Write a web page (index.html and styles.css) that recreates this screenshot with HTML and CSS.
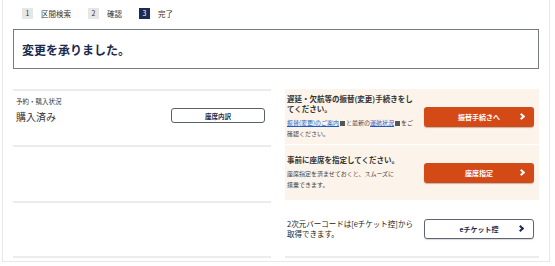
FILE: index.html
```html
<!DOCTYPE html>
<html lang="ja">
<head>
<meta charset="UTF-8" />
<meta name="viewport" content="width=device-width, initial-scale=1" />
<title>変更完了</title>
<link rel="stylesheet" href="styles.css">
</head>
<body>

<div class="frame">
  <ol class="steps">
    <li><span class="num">1</span>区間検索</li>
    <li><span class="num">2</span>確認</li>
    <li class="current"><span class="num">3</span>完了</li>
  </ol>

  <div class="done">
    <h1>変更を承りました。</h1>
  </div>

  <div class="grid">
    <div class="cell left">
      <div class="label">予約・購入状況</div>
      <div class="status">
        <span class="value">購入済み</span>
        <button class="btn btn-line">座席内訳</button>
      </div>
    </div>
    <div class="cell right notice">
      <div class="text">
        <p class="lead">遅延・欠航等の振替(変更)手続きをしてください。</p>
        <p class="note"><a href="#">振替(変更)のご案内</a><span class="win"></span>と最新の<a href="#">運航状況</a><span class="win"></span>をご<br>確認ください。</p>
      </div>
      <button class="btn btn-orange">振替手続きへ<span class="chev"></span></button>
    </div>

    <div class="cell left"></div>
    <div class="cell right notice">
      <div class="text">
        <p class="lead">事前に座席を指定してください。</p>
        <p class="note">座席指定を済ませておくと、スムーズに<br>搭乗できます。</p>
      </div>
      <button class="btn btn-orange">座席指定<span class="chev"></span></button>
    </div>

    <div class="cell left last"></div>
    <div class="cell right last">
      <div class="text">
        <p class="plain">2次元バーコードは[eチケット控]から<br>取得できます。</p>
      </div>
      <button class="btn btn-white">eチケット控<span class="chev"></span></button>
    </div>
  </div>
</div>

</body>
</html>
```

FILE: styles.css
```css
body {
  margin: 0;
  background: #fff;
  color: #333;
  font-family: "Noto Sans CJK JP", "Noto Sans", sans-serif;
}
p { margin: 0; }

.frame {
  width: 526px;
  margin-left: 2px;
  padding: 8px 10px 3px;
  border: 1px solid #e8e8e8;
  border-top: none;
}

/* steps */
.steps {
  list-style: none;
  margin: 0; padding: 0 0 0 9px;
  display: flex;
  gap: 17px;
  height: 11px;
  font-size: 7.5px;
  line-height: 11px;
  color: #333;
}
.steps li {
  display: flex;
  align-items: center;
  gap: 8px;
}
.num {
  width: 11px; height: 11px;
  background: #e6e6e6;
  color: #333;
  text-align: center;
  font-size: 7px;
  line-height: 11px;
}
.current .num {
  background: #1b2b52;
  color: #fff;
}

/* done box */
.done {
  margin-top: 10px;
  height: 38px;
  border: 1px solid #777b82;
  display: flex;
  align-items: center;
  padding-left: 8px;
}
.done h1 {
  margin: 0;
  font-size: 12px;
  font-weight: bold;
  color: #1a2b4e;
}

/* grid */
.grid {
  margin-top: 20px;
  display: grid;
  grid-template-columns: 258px 254px;
  grid-template-rows: 56px 56px 57px;
  column-gap: 14px;
}
.cell.left {
  border-top: 2px solid #ececec;
  padding: 6px 6px 0 3px;
}
.cell.left.last {
  border-bottom: 2px solid #ececec;
}
.label {
  font-size: 6.5px;
  line-height: 9px;
}
.status {
  display: flex;
  justify-content: space-between;
  align-items: flex-start;
  margin-top: 4px;
}
.value {
  font-size: 10px;
  line-height: 14px;
}

.cell.right {
  display: flex;
  align-items: center;
  justify-content: space-between;
  padding: 0 5px 0 2px;
}
.notice {
  background: #fcf3ea;
  border-bottom: 1px solid #fff;
}
.cell.right.last {
  border-bottom: 2px solid #ececec;
}
.text { width: 132px; }
.lead {
  font-size: 7.5px;
  font-weight: bold;
  line-height: 10px;
  color: #333;
}
.note {
  margin-top: 3px;
  font-size: 6px;
  line-height: 11px;
  color: #444;
}
.note a { color: #1f5bc9; }
.win {
  display: inline-block;
  width: 5px; height: 5px;
  background: #555;
  margin: 0 1px;
  vertical-align: -1px;
}
.plain {
  font-size: 7.5px;
  line-height: 10px;
  color: #222;
}

/* buttons */
.btn {
  position: relative;
  font-family: inherit;
  font-weight: bold;
  cursor: pointer;
  border-radius: 3px;
  padding: 0;
}
.btn-line {
  width: 94px; height: 15px;
  margin-top: -2px;
  background: #fff;
  border: 1px solid #5c6069;
  color: #1a2b4e;
  font-size: 6.5px;
}
.btn-orange, .btn-white {
  width: 110px; height: 20px;
  font-size: 7px;
}
.btn-orange {
  background: #d44a17;
  border: none;
  color: #fff;
  box-shadow: 0 1px 1px rgba(0,0,0,0.25);
}
.btn-white {
  background: #fff;
  border: 1px solid #5f6570;
  color: #1a2b4e;
  box-shadow: 0 1px 1px rgba(0,0,0,0.15);
}
.chev {
  position: absolute;
  right: 10px; top: 50%;
  width: 3px; height: 3px;
  margin-top: -2.5px;
  border-top: 2px solid currentColor;
  border-right: 2px solid currentColor;
  transform: rotate(45deg);
}
```
